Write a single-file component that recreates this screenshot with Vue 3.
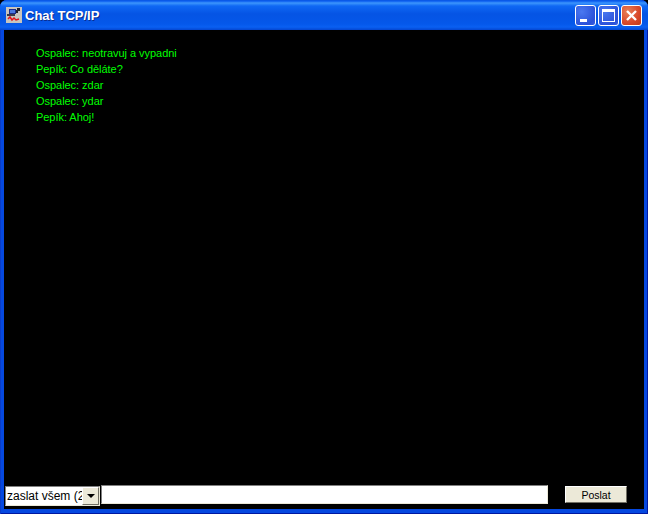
<template>
  <div class="window">
    <div class="titlebar">
      <svg class="app-icon" width="16" height="16" viewBox="0 0 16 16">
        <rect width="16" height="16" fill="#c8c4bc" />
        <rect x="3" y="2" width="7" height="5" fill="#1c2c8c" />
        <rect x="4" y="3" width="5" height="3" fill="#4a78e0" />
        <rect x="1" y="7" width="8" height="2" fill="#3a3a4a" />
        <path d="M11 1h3v3h-2v2h-2V3h1z" fill="#20202c" />
        <path d="M2 12l2-2 2 3 2-2 2 2 3-1" fill="none" stroke="#e0141c" stroke-width="1.5" />
      </svg>
      <span class="title">Chat TCP/IP</span>
      <div class="controls">
        <button class="ctl">
          <span class="min-mark"></span>
        </button>
        <button class="ctl">
          <span class="max-mark"></span>
        </button>
        <button class="ctl close">
          <svg width="13" height="13" viewBox="0 0 13 13">
            <path d="M2 2l9 9M11 2l-9 9" stroke="#fff" stroke-width="2.4" fill="none" />
          </svg>
        </button>
      </div>
    </div>
    <div class="content">
      <div class="messages">
        <div v-for="(line, i) in lines" :key="i" class="line">{{ line }}</div>
      </div>
      <div class="bottom">
        <div class="select">
          <span class="select-text">zaslat všem (2)</span>
          <span class="select-btn"><i class="arrow"></i></span>
        </div>
        <input class="text" type="text" />
        <button class="send">Poslat</button>
      </div>
    </div>
  </div>
</template>

<script setup>
const lines = [
  'Ospalec: neotravuj a vypadni',
  'Pepík: Co děláte?',
  'Ospalec: zdar',
  'Ospalec: ydar',
  'Pepík: Ahoj!'
]
</script>

<style>
html, body {
  margin: 0;
  background: #000;
  overflow: hidden;
}
</style>

<style scoped>
.window {
  width: 648px;
  height: 514px;
  display: flex;
  flex-direction: column;
  box-sizing: border-box;
  background: #0548e0;
  box-shadow: inset 1px 0 #0a3cc8, inset -1px 0 #0018a0, inset 0 -1px #0018a0;
  border-radius: 7px 7px 0 0;
  overflow: hidden;
  font-family: "Liberation Sans", Arial, sans-serif;
}

.titlebar {
  height: 30px;
  flex: none;
  display: flex;
  align-items: center;
  box-sizing: border-box;
  padding: 0 6px;
  background: linear-gradient(to bottom, #0a56e0 0, #0a5cf0 1px, #3d96fc 3px, #0f68f4 6px, #0554e4 14px, #0558ea 24px, #0a60f2 27px, #0446d0 30px);
}

.app-icon {
  flex: none;
}

.title {
  margin-left: 3px;
  color: #fff;
  font-size: 13px;
  font-weight: bold;
  text-shadow: 1px 1px 0 #0a2c90;
}

.controls {
  margin-left: auto;
  display: flex;
  gap: 2px;
}

.ctl {
  width: 21px;
  height: 21px;
  padding: 0;
  box-sizing: border-box;
  border: 1px solid #fff;
  border-radius: 3px;
  background: radial-gradient(circle at 30% 30%, #4a78f0, #2a50d8 75%, #3a60e0);
  display: flex;
  align-items: center;
  justify-content: center;
  position: relative;
}

.close {
  background: radial-gradient(circle at 30% 30%, #e88058, #d8482a 60%, #c03a18);
}

.min-mark {
  position: absolute;
  left: 4px;
  bottom: 3px;
  width: 7px;
  height: 3px;
  background: #fff;
}

.max-mark {
  width: 13px;
  height: 13px;
  box-sizing: border-box;
  border: 1px solid #fff;
  border-top-width: 3px;
}

.content {
  flex: 1;
  min-height: 0;
  margin: 0 4px 5px;
  background: #000;
  display: flex;
  flex-direction: column;
}

.messages {
  flex: 1;
  padding: 15px 0 0 32px;
}

.line {
  color: #00ff00;
  font-size: 11px;
  letter-spacing: -0.04px;
  line-height: 16px;
  height: 16px;
  white-space: nowrap;
}

.bottom {
  flex: none;
  display: flex;
  align-items: flex-start;
  height: 24px;
  padding-left: 1px;
}

.select {
  width: 95px;
  height: 20px;
  margin-top: 1px;
  display: flex;
  box-sizing: border-box;
  background: #fff;
  border: 1px solid;
  border-color: #808080 #ece9d8 #ece9d8 #808080;
  overflow: hidden;
}

.select-text {
  flex: 1;
  min-width: 0;
  overflow: hidden;
  white-space: nowrap;
  font-size: 12px;
  line-height: 18px;
  padding-left: 1px;
  color: #000;
}

.select-btn {
  width: 17px;
  flex: none;
  box-sizing: border-box;
  background: #ece9d8;
  border: 1px solid;
  border-color: #fff #716f64 #716f64 #fff;
  display: flex;
  align-items: center;
  justify-content: center;
}

.arrow {
  width: 0;
  height: 0;
  border-left: 4px solid transparent;
  border-right: 4px solid transparent;
  border-top: 4px solid #000;
}

.text {
  width: 447px;
  height: 19px;
  margin-left: 1px;
  padding: 0;
  box-sizing: border-box;
  background: #fff;
  border: 1px solid;
  border-color: #808080 #ece9d8 #ece9d8 #808080;
  outline: none;
}

.send {
  width: 62px;
  height: 17px;
  margin: 1px 0 0 17px;
  padding: 0;
  box-sizing: border-box;
  background: #ece9d8;
  border: 1px solid;
  border-color: #fff #716f64 #716f64 #fff;
  font-family: "Liberation Sans", Arial, sans-serif;
  font-size: 10.5px;
  color: #000;
}
</style>
